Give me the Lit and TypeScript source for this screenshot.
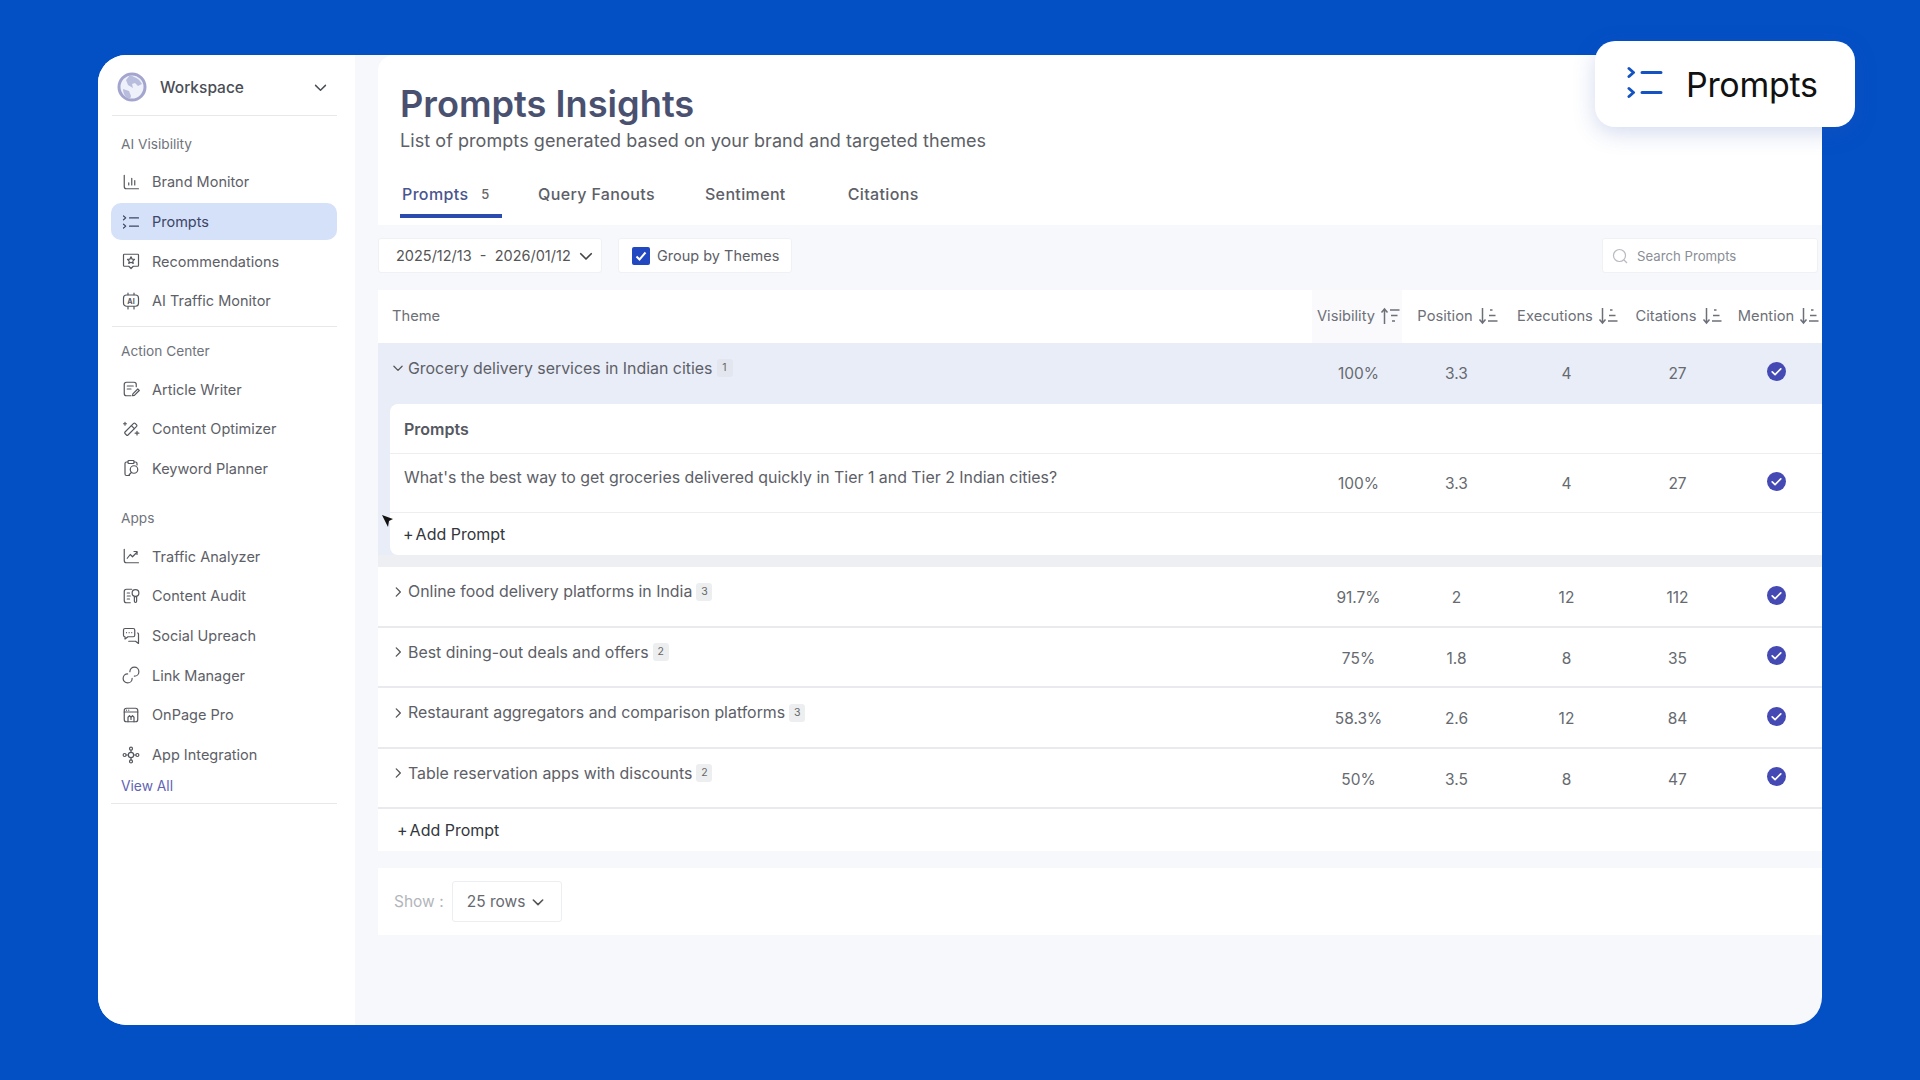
import { LitElement, css, html, svg } from 'lit';
import { customElement } from 'lit/decorators.js';

const icon = (body: unknown, size = 18, sw = 1.6) => html`<svg class="ico" width=${size} height=${size} viewBox="0 0 24 24" fill="none" stroke="currentColor" stroke-width=${sw} stroke-linecap="round" stroke-linejoin="round">${body}</svg>`;

const icons: Record<string, unknown> = {
  brand: svg`<path d="M3 3v15a3 3 0 0 0 3 3h16"/><path d="M9 16v-3M13 16V7M17 16v-6"/>`,
  prompts: svg`<path d="M2 4l3 2.5L2 9M2 15l3 2.5L2 20"/><path d="M10 6.5h12M10 17.5h12"/>`,
  recs: svg`<path d="M3 3h18a1 1 0 0 1 1 1v14a1 1 0 0 1-1 1h-6l-3 3-3-3H3a1 1 0 0 1-1-1V4a1 1 0 0 1 1-1z"/><path d="M12 6.5l1.5 3 3.2.4-2.3 2.2.6 3.2-3-1.6-3 1.6.6-3.2-2.3-2.2 3.2-.4z"/>`,
  traffic: svg`<rect x="2" y="4" width="20" height="15" rx="4"/><path d="M8 1.5v2M16 1.5v2M8 19.5v3M16 19.5v3"/><text x="12" y="15.5" font-size="9.5" font-weight="700" text-anchor="middle" fill="currentColor" stroke="none" font-family="Inter">AI</text>`,
  article: svg`<path d="M19 9V6a3 3 0 0 0-3-3H6a3 3 0 0 0-3 3v12a3 3 0 0 0 3 3h6"/><path d="M7 8h8M7 12h5"/><path d="M21 12l-6.5 6.5-.5 2.5 2.5-.5L23 14z"/>`,
  optimizer: svg`<path d="M19.5 6.5l-2-2a1.5 1.5 0 0 0-2 0L4 16a1.5 1.5 0 0 0 0 2l2 2a1.5 1.5 0 0 0 2 0L19.5 8.5a1.5 1.5 0 0 0 0-2z"/><path d="M12.5 7.5l4 4"/><path d="M4 3v4M2 5h4M20 15v5M17.5 17.5h5"/>`,
  keyword: svg`<path d="M8 4H6a2 2 0 0 0-2 2v14a2 2 0 0 0 2 2h4"/><rect x="8" y="2" width="8" height="4" rx="1"/><path d="M16 4h2a2 2 0 0 1 2 2v2"/><circle cx="16" cy="14" r="5"/><path d="M12.5 18l-3 3"/>`,
  analyzer: svg`<path d="M3 3v15a3 3 0 0 0 3 3h16"/><path d="M7 15l4-5 3 3 6-6"/><path d="M16 6h4v4"/>`,
  audit: svg`<path d="M13 3H6a3 3 0 0 0-3 3v12a3 3 0 0 0 3 3h5"/><path d="M7 8h3M7 12h4M7 16h3"/><circle cx="18" cy="8" r="4.5"/><path d="M16.5 13h3v6a1.5 1.5 0 0 1-3 0z"/>`,
  social: svg`<path d="M4 2h11a2 2 0 0 1 2 2v7a2 2 0 0 1-2 2H8l-4 3v-3a2 2 0 0 1-2-2V4a2 2 0 0 1 2-2z"/><path d="M21 8a2 2 0 0 1 1 2v12l-4-3H9"/><path d="M6 7.5h.01M9.5 7.5h.01M13 7.5h.01"/>`,
  link: svg`<path d="M10.5 7.5a6 6 0 1 1 6 6"/><path d="M13.5 16.5a6 6 0 1 1-6-6"/>`,
  onpage: svg`<rect x="3" y="3" width="18" height="18" rx="3"/><path d="M3 8h18M6 5.5h.01M9 5.5h.01"/><path d="M8 21v-6l2-2 2 2 2-2 2 2v6M12 15v3"/>`,
  integration: svg`<circle cx="12" cy="12" r="3.5"/><circle cx="12" cy="3.5" r="2"/><circle cx="12" cy="20.5" r="2"/><circle cx="3.5" cy="12" r="2"/><circle cx="20.5" cy="12" r="2"/><path d="M12 5.5v3M12 15.5v3M5.5 12h3M15.5 12h3"/>`,
};

const chevDown = (size = 16, sw = 2) => icon(svg`<path d="M5 9l7 7 7-7"/>`, size, sw);
const chevRight = icon(svg`<path d="M9 5l7 7-7 7"/>`, 14, 2.2);

const sortIcon = (up: boolean) => html`<svg class="sort" width="20" height="18" viewBox="0 0 20 18" fill="none" stroke="currentColor" stroke-width="1.5">
  ${up
    ? svg`<path d="M4.5 17V2M1.5 5.5l3-3.5 3 3.5"/><path d="M10 3h9.500M11 8.500h6.500M12 14h3"/>`
    : svg`<path d="M4.5 1v15M1.5 12.500l3 3.500 3-3.500"/><path d="M12 3h2.500M11 8.500h6.500M10 14h9.500"/>`}
</svg>`;

const checkIcon = html`<svg width="19" height="19" viewBox="0 0 20 20"><circle cx="10" cy="10" r="10" fill="#4449b4"/><path d="M5.5 10.3l3 2.9 6-6" fill="none" stroke="#fff" stroke-width="1.8" stroke-linecap="round" stroke-linejoin="round"/></svg>`;

const nav = [
  { label: 'AI Visibility', cls: 'first', items: [['brand', 'Brand Monitor'], ['prompts', 'Prompts'], ['recs', 'Recommendations'], ['traffic', 'AI Traffic Monitor']] },
  { label: 'Action Center', cls: 'ruled', items: [['article', 'Article Writer'], ['optimizer', 'Content Optimizer'], ['keyword', 'Keyword Planner']] },
  { label: 'Apps', cls: 'apps', items: [['analyzer', 'Traffic Analyzer'], ['audit', 'Content Audit'], ['social', 'Social Upreach'], ['link', 'Link Manager'], ['onpage', 'OnPage Pro'], ['integration', 'App Integration']] },
];

const rows = [
  ['Online food delivery platforms in India', '3', '91.7%', '2', '12', '112'],
  ['Best dining-out deals and offers', '2', '75%', '1.8', '8', '35'],
  ['Restaurant aggregators and comparison platforms', '3', '58.3%', '2.6', '12', '84'],
  ['Table reservation apps with discounts', '2', '50%', '3.5', '8', '47'],
];

@customElement('app-root')
export class AppRoot extends LitElement {
  static styles = css`
    :host {
      display: block;
      position: relative;
      width: 1920px;
      height: 1080px;
      padding: 55px 98px;
      box-sizing: border-box;
      background: #034fc4;
      font-family: Inter, 'Liberation Sans', sans-serif;
      color: #5d6067;
      overflow: hidden;
      --cols: 1fr 88px 108px 112px 110px 90px;
    }
    * { box-sizing: border-box; }
    .ico { flex: none; display: block; }
    .card {
      display: flex;
      height: 970px;
      border-radius: 28px 0 28px 28px;
      overflow: hidden;
      background: #f7f8fc;
    }

    .side {
      width: 257px;
      flex: none;
      background: #fff;
      padding: 0 18px 0 13px;
    }
    .ws {
      height: 61px;
      margin-left: 1px;
      border-bottom: 1px solid #e6e8ec;
      display: flex;
      align-items: center;
      padding: 4px 8px 0 5px;
      font-size: 15.5px;
      font-weight: 500;
      color: #4a4d55;
    }
    .ws .globe { margin-right: 13px; }
    .ws span { flex: 1; }
    .sec { font-size: 13.7px; line-height: 20px; color: #6f737b; padding-left: 10px; }
    .first .sec { margin: 18px 0 8px; }
    .ruled { border-top: 1px solid #e6e8ec; margin: 5px 0 0 1px; }
    .ruled .sec { margin: 14px 0 8.5px; padding-left: 9px; }
    .ruled .item { margin-left: -1px; }
    .apps .sec { margin: 20px 0 8px; }
    .item {
      height: 39.7px;
      display: flex;
      align-items: center;
      padding-left: 11px;
      gap: 12px;
      font-size: 14.5px;
      color: #5d6067;
    }
    .item .ico { color: #54575e; }
    .item.on { position: relative; color: #3c4666; z-index: 0; }
    .item.on .ico { color: #3c4666; }
    .item.on::before {
      content: '';
      position: absolute;
      inset: 1px 0;
      background: #d5e0f9;
      border-radius: 10px;
      z-index: -1;
    }
    .viewall {
      font-size: 13.8px;
      line-height: 16px;
      margin-top: 4px;
      padding: 0 0 9px 10px;
      color: #5f64b4;
      border-bottom: 1px solid #e6e8ec;
    }

    .main { flex: 1; min-width: 0; padding-left: 23px; }
    .head {
      height: 170px;
      background: #fff;
      border-radius: 16px 0 0 0;
      padding: 26px 0 0 22px;
    }
    h1 {
      margin: 0;
      font-size: 36.2px;
      line-height: 46px;
      font-weight: 600;
      color: #4a5170;
    }
    .sub { font-size: 18px; letter-spacing: 0.06px; line-height: 24px; margin-top: 2px; color: #5d6067; }
    .tabs { display: flex; margin-top: 21px; height: 44px; font-size: 16px; font-weight: 500; letter-spacing: 0.36px; color: #5d6067; }
    .tab { padding-top: 10px; line-height: 20px; }
    .tab.on { width: 102px; margin-right: 36px; padding-left: 2px; color: #4a5590; border-bottom: 4px solid #2b4bae; display: flex; gap: 13px; align-items: flex-start; }
    .tab.on b { font-weight: 500; font-size: 13px; color: #666; }
    .tab.q { margin-right: 50px; }
    .tab.s { margin-right: 62px; }

    .bar { display: flex; align-items: center; gap: 16px; margin-top: 13px; height: 35px; }
    .box {
      height: 35px;
      background: #fff;
      border: 1px solid #f0f1f5;
      border-radius: 3px;
      display: flex;
      align-items: center;
      font-size: 14.5px;
      color: #5d6067;
    }
    .date { width: 224px; padding: 0 6px 0 17px; justify-content: space-between; color: #555; }
    .date svg { color: #444; }
    .group { width: 174px; padding-left: 13px; gap: 7px; }
    .cb { width: 18px; height: 18px; border-radius: 2px; background: #2148c0; display: flex; align-items: center; justify-content: center; }
    .search { margin-left: auto; margin-right: 4px; width: 216px; padding-left: 9px; gap: 9px; font-size: 13.2px; color: #8a8e96; }

    .table { margin-top: 17px; background: #fff; }
    .row { display: grid; grid-template-columns: var(--cols); align-items: center; }
    .thead { height: 53px; padding-bottom: 2px; font-size: 14.7px; color: #6d7078; }
    .thead > div { display: flex; justify-content: center; align-items: center; gap: 5px; height: 100%; padding-left: 3px; }
    .thead > div:first-child { justify-content: flex-start; padding-left: 14px; }
    .thead .vis { background: #fafafc; margin: 0 0 -2px -2px; height: calc(100% + 2px); padding-bottom: 2px; }
    .sort { flex: none; color: #6d7078; }
    .val { text-align: center; font-size: 15.5px; color: #666a70; padding: 3px 0 0 1px; }
    .chk { display: flex; justify-content: center; padding: 0 1px 2px 0; }
    .theme { display: flex; align-items: center; font-size: 15.9px; color: #5d6067; padding: 0 0 9px 13px; }
    .theme .ico { color: #555; margin-right: 3px; }
    .cnt { margin-left: 4px; width: 16px; height: 18px; border-radius: 3px; background: #eceef0; font-size: 10.5px; line-height: 18px; text-align: center; color: #666; }
    .expanded { height: 61px; background: #e9edf8; }
    .expanded .cnt { background: #e3e6ef; }
    .expanded .theme { padding-bottom: 11px; }
    .expanded .val { padding-top: 0; }
    .expanded .chk { padding-bottom: 4px; }
    .panel { background: #e9edf8; padding-left: 12px; }
    .inner { background: #fff; height: 151px; border-radius: 8px 0 0 8px; }
    .ptitle { height: 50px; border-bottom: 1px solid #eceef1; padding-left: 14px; display: flex; align-items: center; font-size: 16px; font-weight: 600; color: #55585f; }
    .prow { height: 59px; border-bottom: 1px solid #eceef1; }
    .prow .val { padding-top: 1px; }
    .prow .chk { padding-bottom: 3px; }
    .ptext { padding: 0 0 11px 14px; font-size: 15.9px; color: #5d6067; white-space: nowrap; }
    .padd { height: 42px; padding-left: 13px; display: flex; align-items: center; gap: 2px; font-size: 16px; color: #33363c; }
    .band { height: 12px; background: #eeeff2; }
    .trow { height: 60.5px; border-bottom: 2px solid #e9eaed; }
    .tadd { height: 42px; padding-left: 19px; display: flex; align-items: center; gap: 2px; font-size: 16px; color: #33363c; }

    .foot {
      margin-top: 17px;
      height: 67px;
      background: #fff;
      padding-left: 16px;
      display: flex;
      align-items: center;
      gap: 8px;
      font-size: 15.5px;
      color: #b3b6bb;
    }
    .rows { width: 110px; height: 41px; border: 1px solid #eceef1; border-radius: 3px; display: flex; align-items: center; justify-content: center; gap: 5px; color: #666a70; }
    .rows svg { color: #555; }

    .pop {
      position: absolute;
      left: 1595px;
      top: 41px;
      width: 260px;
      height: 86px;
      border-radius: 20px;
      background: #fff;
      box-shadow: 0 6px 22px rgba(60, 90, 180, 0.22);
      display: flex;
      align-items: center;
      gap: 23px;
      padding-left: 32px;
      font-size: 34px;
      letter-spacing: -0.3px;
      color: #111;
    }
    .pop svg { color: #1553c2; margin-top: -3px; }
    .cursor { position: absolute; left: 381px; top: 514px; }
  `;

  render() {
    return html`
      <div class="card">
        <aside class="side">
          <div class="ws">
            <svg class="globe" width="30" height="30" viewBox="0 0 30 30">
              <circle cx="15" cy="15" r="13" fill="#eef0fa" stroke="#a3a5cf" stroke-width="3"/>
              <path d="M13 3c4 2 9 3 12 9l-4 2-3-3-3 1 1 4-5-3-2-5zM6 17l6 2 2 5-1 3c-5-1-7-6-7-10z" fill="#b9bddd"/>
            </svg>
            <span>Workspace</span>
            ${chevDown(17, 2)}
          </div>
          ${nav.map(n => html`
            <div class=${n.cls}>
              <div class="sec">${n.label}</div>
              ${n.items.map(([ic, label]) => html`
                <div class="item ${label === 'Prompts' ? 'on' : ''}">${icon(icons[ic])}<span>${label}</span></div>
              `)}
            </div>
          `)}
          <div class="viewall">View All</div>
        </aside>

        <main class="main">
          <section class="head">
            <h1>Prompts Insights</h1>
            <div class="sub">List of prompts generated based on your brand and targeted themes</div>
            <div class="tabs">
              <div class="tab on"><span>Prompts</span><b>5</b></div>
              <div class="tab q">Query Fanouts</div>
              <div class="tab s">Sentiment</div>
              <div class="tab">Citations</div>
            </div>
          </section>

          <div class="bar">
            <div class="box date"><span>2025/12/13&nbsp; -&nbsp; 2026/01/12</span>${chevDown(18, 2.2)}</div>
            <div class="box group">
              <span class="cb"><svg width="14" height="14" viewBox="0 0 14 14"><path d="M2.5 7.5l3 3 6-7" fill="none" stroke="#fff" stroke-width="2"/></svg></span>
              <span>Group by Themes</span>
            </div>
            <div class="box search">
              <svg width="16" height="16" viewBox="0 0 16 16" fill="none" stroke="#b8bbc2" stroke-width="1.2"><circle cx="7.5" cy="7.5" r="6"/><path d="M12 12l3 3"/></svg>
              <span>Search Prompts</span>
            </div>
          </div>

          <section class="table">
            <div class="row thead">
              <div>Theme</div>
              <div class="vis">Visibility${sortIcon(true)}</div>
              <div>Position${sortIcon(false)}</div>
              <div>Executions${sortIcon(false)}</div>
              <div>Citations${sortIcon(false)}</div>
              <div>Mention${sortIcon(false)}</div>
            </div>
            <div class="row expanded">
              <div class="theme">${icon(svg`<path d="M5 9l7 7 7-7"/>`, 14, 2.2)}<span>Grocery delivery services in Indian cities</span><span class="cnt">1</span></div>
              <div class="val">100%</div><div class="val">3.3</div><div class="val">4</div><div class="val">27</div>
              <div class="chk">${checkIcon}</div>
            </div>
            <div class="panel">
              <div class="inner">
                <div class="ptitle">Prompts</div>
                <div class="row prow">
                  <div class="ptext">What's the best way to get groceries delivered quickly in Tier 1 and Tier 2 Indian cities?</div>
                  <div class="val">100%</div><div class="val">3.3</div><div class="val">4</div><div class="val">27</div>
                  <div class="chk">${checkIcon}</div>
                </div>
                <div class="padd"><span>+</span><span>Add Prompt</span></div>
              </div>
            </div>
            <div class="band"></div>
            ${rows.map(r => html`
              <div class="row trow">
                <div class="theme">${chevRight}<span>${r[0]}</span><span class="cnt">${r[1]}</span></div>
                <div class="val">${r[2]}</div><div class="val">${r[3]}</div><div class="val">${r[4]}</div><div class="val">${r[5]}</div>
                <div class="chk">${checkIcon}</div>
              </div>
            `)}
            <div class="tadd"><span>+</span><span>Add Prompt</span></div>
          </section>

          <div class="foot">
            <span>Show :</span>
            <div class="rows"><span>25 rows</span>${chevDown(16, 2.4)}</div>
          </div>
        </main>
      </div>

      <div class="pop">
        <svg width="36" height="33" viewBox="0 0 36 33" fill="none" stroke="currentColor" stroke-width="3" stroke-linecap="round" stroke-linejoin="round">
          <path d="M2 2.5l4.500 4-4.500 4M2 22.500l4.500 4-4.500 4"/><path d="M15 6.500h19M15 26.500h19"/>
        </svg>
        <span>Prompts</span>
      </div>
      <svg class="cursor" width="13" height="14" viewBox="0 0 13 14"><path d="M1 1l11 4-4 2-1 6z" fill="#111"/></svg>
    `;
  }
}
